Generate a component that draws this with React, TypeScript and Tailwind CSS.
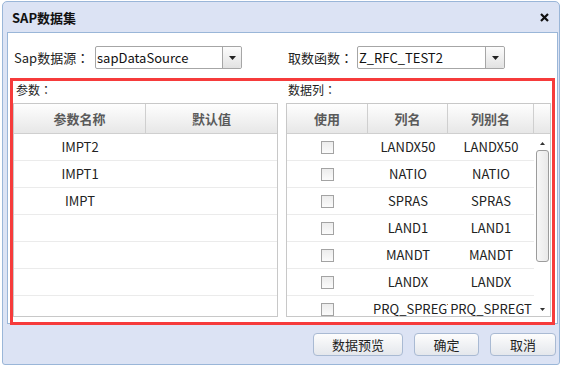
import React from 'react';

const leftRows = ['IMPT2', 'IMPT1', 'IMPT', '', '', '', ''];
const rightRows = ['LANDX50', 'NATIO', 'SPRAS', 'LAND1', 'MANDT', 'LANDX', 'PRQ_SPREGT'];

// full-width colon centred in its box, like the original's UI font
const Colon: React.FC = () => <span className="font-['Noto_Sans_CJK_TC',sans-serif]">：</span>;

const Arrow: React.FC = () => (
  <svg width="7" height="4" viewBox="0 0 7 4">
    <path d="M0 0h7L3.5 4z" fill="#222" />
  </svg>
);

const Select: React.FC<{ value: string; width: string }> = ({ value, width }) => (
  <div className={`flex h-[23px] ${width} border border-[#a6a6a6] rounded-[2px] bg-white`}>
    <div className="flex-1 flex items-center pl-[1px] text-[13px] text-[#111] leading-none">{value}</div>
    <div className="w-[19px] flex items-center justify-center border-l border-[#a6a6a6] bg-linear-to-b from-[#fcfcfc] to-[#e2e2e2] rounded-r-[2px]">
      <Arrow />
    </div>
  </div>
);

const Checkbox: React.FC = () => (
  <div className="w-[13px] h-[13px] border border-[#a3a3a3] bg-linear-to-b from-[#ececec] to-[#fbfbfb]" />
);

const HeaderCell: React.FC<{ w: string; last?: boolean; children?: React.ReactNode }> = ({ w, last, children }) => (
  <div className={`${w} h-full flex items-center justify-center ${last ? '' : 'border-r border-[#cfcfcf]'}`}>
    {children}
  </div>
);

const Button: React.FC<{ w: string; children: React.ReactNode }> = ({ w, children }) => (
  <button className={`${w} h-[23px] rounded-[4px] border border-[#a9bad3] bg-linear-to-b from-[#fdfdfd] to-[#e4e7ec] text-[13px] text-[#222] leading-none flex items-center justify-center`}>
    {children}
  </button>
);

const App: React.FC = () => {
  return (
    <div className="w-[564px] h-[367px] bg-white pt-px pl-[2px] font-['Noto_Sans_CJK_SC','Noto_Sans',sans-serif] text-[#222] overflow-hidden">
      <div className="w-[558px] h-[364px] bg-[#dce3f4] border border-[#9ab6d8] rounded-t-[5px] rounded-b-[3px] flex flex-col">
        {/* title bar */}
        <div className="h-[30px] flex items-center justify-between pl-[9px] pr-[10px]">
          <span className="text-[13px] font-bold leading-none text-[#111]">SAP数据集</span>
          <svg width="9" height="9" viewBox="0 0 9 9">
            <path d="M1 1l7 7M8 1L1 8" stroke="#111" strokeWidth="2.2" />
          </svg>
        </div>

        {/* body */}
        <div className="relative ml-[4px] w-[551px] h-[292px] bg-white border border-[#9ab6d8]">
          <div className="flex items-center pt-[13px] pl-[6px] text-[13px] leading-none">
            <span className="w-[81px]">Sap数据源<Colon /></span>
            <Select value="sapDataSource" width="w-[147px]" />
            <span className="ml-[46px] w-[69px]">取数函数<Colon /></span>
            <Select value="Z_RFC_TEST2" width="w-[148px]" />
          </div>

          <div className="flex gap-[8px] pl-[5px] pt-[14px]">
            {/* params */}
            <div className="w-[265px]">
              <div className="h-[20px] pl-[3px] text-[12px] leading-[14px]">参数<Colon /></div>
              <div className="h-[214px] border border-[#c8c8c8] overflow-hidden">
                <div className="h-[30px] flex border-b border-[#cfcfcf] bg-linear-to-b from-[#fefefe] to-[#e7e7e7] text-[13px] font-bold text-[#5a5a5a]">
                  <HeaderCell w="w-[132px]">参数名称</HeaderCell>
                  <HeaderCell w="flex-1" last>默认值</HeaderCell>
                </div>
                {leftRows.map((r, i) => (
                  <div key={i} className="h-[27px] flex border-b border-[#ebebeb] text-[13px] text-[#222]">
                    <div className="w-[132px] flex items-center justify-center">{r}</div>
                    <div className="flex-1" />
                  </div>
                ))}
              </div>
            </div>

            {/* columns */}
            <div className="w-[265px]">
              <div className="h-[20px] pl-[2px] text-[12px] leading-[14px]">数据列<Colon /></div>
              <div className="h-[214px] border border-[#c8c8c8] overflow-hidden">
                <div className="h-[30px] flex border-b border-[#cfcfcf] bg-linear-to-b from-[#fefefe] to-[#e7e7e7] text-[13px] font-bold text-[#5a5a5a]">
                  <HeaderCell w="w-[81px]">使用</HeaderCell>
                  <HeaderCell w="w-[80px]">列名</HeaderCell>
                  <HeaderCell w="w-[86px]">列别名</HeaderCell>
                  <HeaderCell w="flex-1" last />
                </div>
                <div className="flex">
                  <div className="w-[247px]">
                    {rightRows.map((r) => (
                      <div key={r} className="h-[27px] flex border-b border-[#ebebeb] text-[13px] text-[#222] leading-[26px]">
                        <div className="w-[81px] flex items-center justify-center">
                          <Checkbox />
                        </div>
                        <div className="w-[80px] px-[5px] text-center whitespace-nowrap overflow-hidden">{r}</div>
                        <div className="w-[86px] text-center whitespace-nowrap overflow-hidden">{r}</div>
                      </div>
                    ))}
                  </div>
                  {/* scrollbar */}
                  <div className="flex-1 h-[182px] flex flex-col items-center pt-[8px]">
                    <svg width="5" height="3" viewBox="0 0 5 3">
                      <path d="M0 3h5L2.5 0z" fill="#333" />
                    </svg>
                    <div className="mt-[5px] w-[13px] h-[112px] rounded-[3px] border border-[#9c9c9c] bg-linear-to-r from-[#f7f7f7] to-[#e9e9e9]" />
                    <div className="flex-1" />
                    <svg width="5" height="3" viewBox="0 0 5 3" className="mb-[5px]">
                      <path d="M0 0h5L2.5 3z" fill="#333" />
                    </svg>
                  </div>
                </div>
              </div>
            </div>
          </div>

          {/* red highlight annotation */}
          <div className="absolute left-[2px] top-[45px] w-[545px] h-[247px] border-[3px] border-[#f63b3b] pointer-events-none" />
        </div>

        {/* footer buttons */}
        <div className="flex justify-end gap-[11px] pt-[9px] pr-[3px]">
          <Button w="w-[90px]">数据预览</Button>
          <Button w="w-[65px]">确定</Button>
          <Button w="w-[66px]">取消</Button>
        </div>
      </div>
    </div>
  );
};

export default App;
